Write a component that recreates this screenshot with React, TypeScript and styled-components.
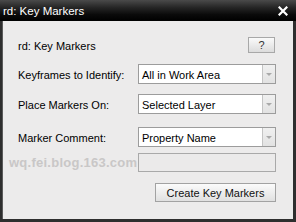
import React from "react";
import styled, { createGlobalStyle } from "styled-components";

const Global = createGlobalStyle`
  html, body { margin: 0; padding: 0; background: #2c2c2c; }
  body { font-family: "Liberation Sans", Arial, sans-serif; }
  * { box-sizing: border-box; }
`;

const Window = styled.div`
  width: 296px;
  height: 222px;
  display: flex;
  flex-direction: column;
  background: #2e2e2e;
  padding: 0 3px 3px 2px;
`;

const TitleBar = styled.div`
  height: 21px;
  margin: 0 -3px 0 -2px;
  padding: 0 8px 0 3px;
  display: flex;
  align-items: center;
  justify-content: space-between;
  background: linear-gradient(#4a4a4a 0%, #262626 35%, #0a0a0a 70%, #000 100%);
  color: #fff;
  font-size: 11.5px;
`;

const TitleText = styled.span`
  padding-top: 1px;
`;

const CloseX = styled.svg`
  width: 10px;
  height: 10px;
  display: block;
`;

const Content = styled.div`
  flex: 1;
  background: #ecebeb;
  border-left: 1px solid #5a5a5a;
  padding: 16px 17px 0 15px;
  display: flex;
  flex-direction: column;
  font-size: 11px;
  color: #000;
`;

const Row = styled.div<{ $top: number; $h: number }>`
  display: flex;
  align-items: center;
  height: ${(p) => p.$h}px;
  margin-top: ${(p) => p.$top}px;
`;

const Label = styled.div`
  width: 120px;
  padding-top: 2px;
`;

const Spacer = styled.div`
  flex: 1;
`;

const HelpButton = styled.div`
  width: 27px;
  height: 16px;
  margin-right: 1px;
  border: 1px solid #a8a8a8;
  background: linear-gradient(#fafafa, #dcdcdc);
  display: flex;
  align-items: center;
  justify-content: center;
  font-size: 11px;
  color: #333;
`;

const Select = styled.div`
  width: 138px;
  height: 20px;
  border: 1px solid #9c9c9c;
  background: #fff;
  display: flex;
  align-items: stretch;
`;

const SelectText = styled.div`
  flex: 1;
  padding: 2px 0 0 3px;
  display: flex;
  align-items: center;
  white-space: nowrap;
`;

const ArrowBox = styled.div`
  width: 13px;
  border-left: 1px solid #c4c4c4;
  background: linear-gradient(#f0f0f0, #e2e2e2);
  display: flex;
  align-items: center;
  justify-content: center;
`;

const Arrow = styled.div`
  width: 0;
  height: 0;
  border-left: 3px solid transparent;
  border-right: 3px solid transparent;
  border-top: 3px solid #a9a9a9;
`;

const Watermark = styled.div`
  width: 120px;
  margin-left: -9px;
  margin-right: 9px;
  font-size: 13px;
  font-weight: bold;
  color: #c9c7c7;
  white-space: nowrap;
  letter-spacing: 0.25px;
`;

const TextField = styled.div`
  width: 139px;
  height: 19px;
  border: 1px solid #a9a9a9;
  background: #ebeaea;
`;

const ActionButton = styled.div`
  width: 121px;
  height: 19px;
  border: 1px solid #a2a2a2;
  background: linear-gradient(#fbfbfb, #e0e0e0);
  display: flex;
  align-items: center;
  justify-content: center;
  padding-top: 1px;
  color: #111;
`;

const Dropdown = ({ value }: { value: string }) => (
  <Select>
    <SelectText>{value}</SelectText>
    <ArrowBox>
      <Arrow />
    </ArrowBox>
  </Select>
);

export default function App() {
  return (
    <>
      <Global />
      <Window>
        <TitleBar>
          <TitleText>rd: Key Markers</TitleText>
          <CloseX viewBox="0 0 10 10">
            <path d="M1.5 1.5 L8.5 8.5 M8.5 1.5 L1.5 8.5" stroke="#fff" strokeWidth="2.2" strokeLinecap="square" />
          </CloseX>
        </TitleBar>
        <Content>
          <Row $top={0} $h={16}>
            <Label>rd: Key Markers</Label>
            <Spacer />
            <HelpButton>?</HelpButton>
          </Row>
          <Row $top={11} $h={20}>
            <Label>Keyframes to Identify:</Label>
            <Dropdown value="All in Work Area" />
          </Row>
          <Row $top={10} $h={20}>
            <Label>Place Markers On:</Label>
            <Dropdown value="Selected Layer" />
          </Row>
          <Row $top={13} $h={20}>
            <Label>Marker Comment:</Label>
            <Dropdown value="Property Name" />
          </Row>
          <Row $top={6} $h={19}>
            <Watermark>wq.fei.blog.163.com</Watermark>
            <TextField />
          </Row>
          <Row $top={11} $h={19}>
            <Spacer />
            <ActionButton>Create Key Markers</ActionButton>
          </Row>
        </Content>
      </Window>
    </>
  );
}
